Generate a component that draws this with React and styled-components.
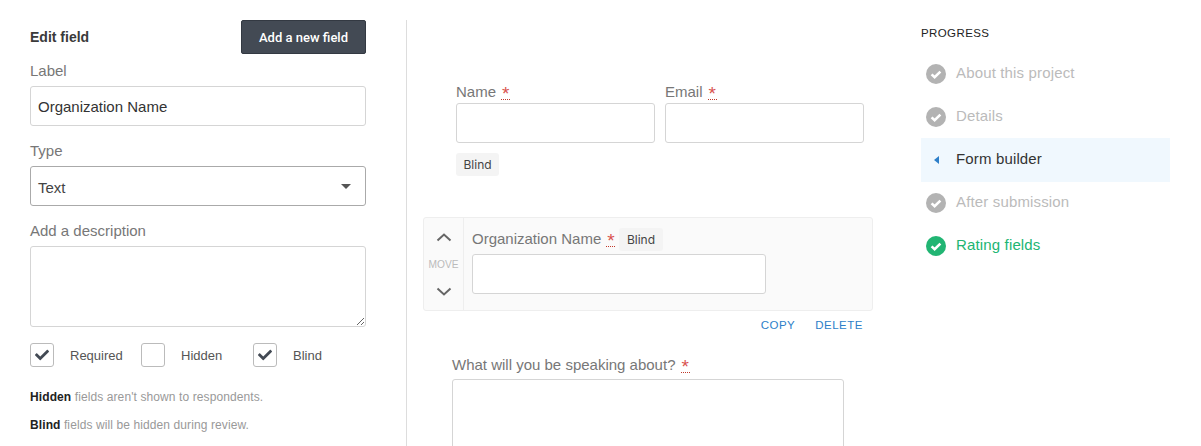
import styled, { createGlobalStyle } from "styled-components";
import { FaCheck } from "react-icons/fa";

const GlobalStyle = createGlobalStyle`
  html, body {
    margin: 0;
    padding: 0;
    height: 446px;
    overflow: hidden;
    background: #fff;
    font-family: "Liberation Sans", Arial, sans-serif;
  }
  * { box-sizing: border-box; }
`;

const progressSteps = [
  { name: "About this project", state: "done" },
  { name: "Details", state: "done" },
  { name: "Form builder", state: "active" },
  { name: "After submission", state: "done" },
  { name: "Rating fields", state: "complete" },
];

const Required = () => <Star title="required">*</Star>;

const StepCheck = ({ color }) => (
  <svg width="20" height="20" viewBox="0 0 20 20">
    <circle cx="10" cy="10" r="10" fill={color} />
    <path d="M5.6 10.4 8.6 13.2 14.4 7.6" fill="none" stroke="#fff" strokeWidth="2.6" />
  </svg>
);

const Chevron = ({ up }) => (
  <svg width="16" height="10" viewBox="0 0 16 10">
    <path
      d={up ? "M1.5 8.5 8 2.5 14.5 8.5" : "M1.5 1.5 8 7.5 14.5 1.5"}
      fill="none"
      stroke="#666"
      strokeWidth="2"
    />
  </svg>
);

const Check = ({ label, checked }) => (
  <CheckItem>
    <CheckBox>{checked && <FaCheck size={14} color="#434a54" />}</CheckBox>
    <CheckLabel>{label}</CheckLabel>
  </CheckItem>
);

function App() {
  return (
    <Page>
      <GlobalStyle />
      <EditColumn>
        <EditHeader>
          <EditTitle>Edit field</EditTitle>
          <AddButton>Add a new field</AddButton>
        </EditHeader>
        <SideLabel $top={9}>Label</SideLabel>
        <TextInput readOnly value="Organization Name" />
        <SideLabel $top={17}>Type</SideLabel>
        <SelectBox>
          <span>Text</span>
          <Caret />
        </SelectBox>
        <SideLabel $top={17}>Add a description</SideLabel>
        <DescriptionArea />
        <CheckRow>
          <Check label="Required" checked />
          <Check label="Hidden" />
          <Check label="Blind" checked />
        </CheckRow>
        <HelpText $top={23}>
          <b>Hidden</b> fields aren't shown to respondents.
        </HelpText>
        <HelpText $top={14}>
          <b>Blind</b> fields will be hidden during review.
        </HelpText>
      </EditColumn>

      <FormColumn>
        <NameRow>
          <NameField>
            <FieldLabel>
              Name <Required />
            </FieldLabel>
            <FieldInput />
          </NameField>
          <NameField>
            <FieldLabel>
              Email <Required />
            </FieldLabel>
            <FieldInput />
          </NameField>
        </NameRow>
        <NameTag>Blind</NameTag>

        <FieldCard>
          <MoveColumn>
            <Chevron up />
            <MoveText>MOVE</MoveText>
            <Chevron />
          </MoveColumn>
          <CardBody>
            <CardLabelRow>
              <FieldLabel>
                Organization Name <Required />
              </FieldLabel>
              <Tag>Blind</Tag>
            </CardLabelRow>
            <FieldInput />
          </CardBody>
        </FieldCard>
        <CardActions>
          <ActionLink>COPY</ActionLink>
          <ActionLink>DELETE</ActionLink>
        </CardActions>

        <SpeakingField>
          <FieldLabel>
            What will you be speaking about? <Required />
          </FieldLabel>
          <SpeakingBox />
        </SpeakingField>
      </FormColumn>

      <ProgressColumn>
        <ProgressTitle>PROGRESS</ProgressTitle>
        {progressSteps.map((step) => (
          <ProgressStep key={step.name} $state={step.state}>
            <StepIcon>
              {step.state === "active" ? (
                <ActiveArrow />
              ) : (
                <StepCheck color={step.state === "complete" ? "#21b573" : "#b3b3b3"} />
              )}
            </StepIcon>
            {step.name}
          </ProgressStep>
        ))}
      </ProgressColumn>
    </Page>
  );
}

const Page = styled.div`
  display: flex;
  height: 446px;
  overflow: hidden;
  padding-left: 30px;
`;

const EditColumn = styled.div`
  width: 336px;
  padding-top: 20px;
`;

const EditHeader = styled.div`
  display: flex;
  justify-content: space-between;
  align-items: center;
  height: 34px;
`;

const EditTitle = styled.div`
  font-size: 14px;
  font-weight: 700;
  color: #3a3a3a;
`;

const AddButton = styled.button`
  width: 125px;
  height: 34px;
  padding: 0;
  background: #434a54;
  border: 1px solid #333942;
  border-radius: 2px;
  color: #fff;
  font: 500 13px Roboto, "Liberation Sans", sans-serif;
`;

const SideLabel = styled.div`
  margin-top: ${(props) => props.$top}px;
  margin-bottom: 6px;
  height: 17px;
  line-height: 15px;
  font-size: 15px;
  color: #777;
`;

const TextInput = styled.input`
  display: block;
  width: 100%;
  height: 40px;
  padding: 0 7px;
  border: 1px solid #d5d5d5;
  border-radius: 3px;
  outline: none;
  font: 15px "Liberation Sans", Arial, sans-serif;
  color: #333;
`;

const SelectBox = styled.div`
  display: flex;
  justify-content: space-between;
  align-items: center;
  height: 40px;
  padding: 2px 14px 0 7px;
  border: 1px solid #aaa;
  border-radius: 3px;
  font-size: 15px;
  color: #444;
`;

const Caret = styled.span`
  width: 0;
  height: 0;
  margin-top: -2px;
  border-left: 5.5px solid transparent;
  border-right: 5.5px solid transparent;
  border-top: 5px solid #555;
`;

const DescriptionArea = styled.textarea`
  display: block;
  width: 100%;
  height: 81px;
  border: 1px solid #d5d5d5;
  border-radius: 3px;
  outline: none;
  resize: vertical;
`;

const CheckRow = styled.div`
  display: grid;
  grid-template-columns: 111px 112px 1fr;
  margin-top: 16px;
`;

const CheckItem = styled.div`
  display: flex;
  align-items: center;
`;

const CheckBox = styled.span`
  display: flex;
  align-items: center;
  justify-content: center;
  width: 24px;
  height: 24px;
  margin-right: 16px;
  border: 1px solid #bbb;
  border-radius: 3px;
  background: #fff;
`;

const CheckLabel = styled.span`
  font-size: 13px;
  color: #555;
`;

const HelpText = styled.div`
  margin-top: ${(props) => props.$top}px;
  height: 14px;
  line-height: 14px;
  font-size: 12px;
  letter-spacing: 0.1px;
  color: #999;

  b {
    color: #222;
  }
`;

const FormColumn = styled.div`
  width: 515px;
  margin-left: 40px;
  padding: 0 0 0 16px;
  margin-top: 20px;
  border-left: 1px solid #ddd;
`;

const NameRow = styled.div`
  display: flex;
  gap: 10px;
  margin-top: 63px;
  margin-left: 33px;
  width: 408px;
`;

const NameField = styled.div`
  flex: 1;
`;

const FieldLabel = styled.label`
  display: block;
  height: 20px;
  line-height: 18px;
  font-size: 15px;
  color: #777;
`;

const Star = styled.abbr`
  display: inline-block;
  width: 9px;
  height: 15px;
  margin-left: 1px;
  vertical-align: -3px;
  text-align: center;
  font-size: 19px;
  line-height: 18px;
  color: #d9534f;
  text-decoration: none;
  border-bottom: 1px dotted #c0392b;
`;

const FieldInput = styled.input`
  display: block;
  width: 100%;
  height: 40px;
  border: 1px solid #d5d5d5;
  border-radius: 3px;
  outline: none;
  background: #fff;
`;

const Tag = styled.span`
  display: inline-block;
  height: 23px;
  padding: 0 7.5px;
  border-radius: 3px;
  background: #f4f4f4;
  font: 12px/23px Inter, "Liberation Sans", sans-serif;
  color: #444;
`;

const NameTag = styled(Tag)`
  margin: 10px 0 0 33px;
`;

const FieldCard = styled.div`
  display: flex;
  width: 450px;
  height: 94px;
  margin-top: 41px;
  background: #fafafa;
  border: 1px solid #eee;
  border-radius: 3px;
`;

const MoveColumn = styled.div`
  display: flex;
  flex-direction: column;
  align-items: center;
  justify-content: space-between;
  width: 40px;
  padding: 14px 0 13px;
  border-right: 1px solid #eee;
`;

const MoveText = styled.span`
  font-size: 10.2px;
  color: #bbb;
`;

const CardBody = styled.div`
  padding: 10px 0 0 8px;
  width: 302px;
`;

const CardLabelRow = styled.div`
  display: flex;
  align-items: center;
  gap: 4px;
  height: 23px;
  margin-bottom: 3px;

  label {
    height: 19px;
  }
`;

const CardActions = styled.div`
  display: flex;
  justify-content: flex-end;
  gap: 20px;
  width: 440px;
  margin-top: 8px;
`;

const ActionLink = styled.a`
  font-size: 11.5px;
  letter-spacing: 0.5px;
  color: #2d7fc9;
`;

const SpeakingField = styled.div`
  width: 392px;
  margin-left: 29px;
  margin-top: 25px;
`;

const SpeakingBox = styled.div`
  height: 120px;
  margin-top: 3px;
  border: 1px solid #d5d5d5;
  border-radius: 3px;
`;

const ProgressColumn = styled.div`
  width: 249px;
  padding-top: 27px;
`;

const ProgressTitle = styled.div`
  height: 13px;
  line-height: 13px;
  margin-bottom: 12px;
  font-size: 11.5px;
  letter-spacing: 0.4px;
  color: #222;
`;

const stepColors = { done: "#bbb", active: "#333", complete: "#21b573" };

const ProgressStep = styled.div`
  display: flex;
  align-items: center;
  height: ${(props) => (props.$state === "active" ? 44 : 43)}px;
  margin-bottom: ${(props) => (props.$state === "active" ? -1 : 0)}px;
  padding-left: 5px;
  padding-bottom: ${(props) => (props.$state === "active" ? 3 : 2)}px;
  font-size: 15px;
  letter-spacing: 0.15px;
  color: ${(props) => stepColors[props.$state]};
  background: ${(props) => (props.$state === "active" ? "#f0f8fe" : "transparent")};
`;

const StepIcon = styled.span`
  display: flex;
  align-items: center;
  justify-content: center;
  width: 20px;
  height: 20px;
  margin-top: 2px;
  margin-right: 10px;
`;

const ActiveArrow = styled.span`
  width: 0;
  height: 0;
  border-top: 4px solid transparent;
  border-bottom: 4px solid transparent;
  border-right: 5px solid #2d7fc9;
`;

export default App;
